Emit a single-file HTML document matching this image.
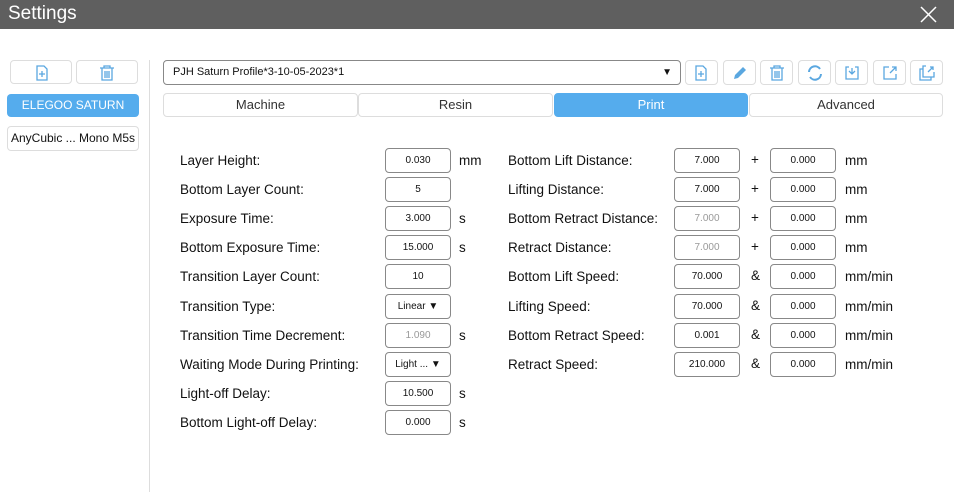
<!DOCTYPE html><html><head><style>
body{margin:0;width:954px;height:498px;background:#fff;font-family:"Liberation Sans",sans-serif;position:relative;overflow:hidden;color:#111}
.a{position:absolute}
.t{background:#5f5f5f;height:29px;left:0;top:0;width:954px;color:#fff;font-size:19px}
.btn{border:1px solid #ddd;border-radius:4px;background:#fff;box-sizing:border-box}
.lab{font-size:13.5px}
.in{border:1px solid #888;border-radius:4px;background:#fff;box-sizing:border-box;width:66px;height:25px;font-size:10px;text-align:center;line-height:23px}
.g{color:#999}
.tab{border:1px solid #ddd;border-radius:4px;box-sizing:border-box;height:24px;top:93px;font-size:13px;text-align:center;line-height:22px;color:#333}
.ic{top:60px;width:33px;height:25px}
.ic svg{position:absolute;left:8px;top:4px}
</style></head><body>
<div class="a t"><span class="a" style="left:8px;top:3px">Settings</span><svg class="a" style="left:920px;top:6px" width="17" height="17" viewBox="0 0 17 17" stroke="#fff" stroke-width="1.5"><path d="M1 1l15 15M16 1L1 16"/></svg></div>
<div class="a btn" style="left:10px;top:60px;width:62px;height:24px"><svg class="a" style="left:24px;top:4px" width="14" height="16" viewBox="0 0 14 16" fill="none" stroke="#5aa7e0" stroke-width="1.3"><path d="M2 1h7l3 3v11H2z M7 6v6 M4 9h6"/></svg></div>
<div class="a btn" style="left:76px;top:60px;width:62px;height:24px"><svg class="a" style="left:22px;top:4px" width="16" height="16" viewBox="0 0 16 16" fill="none" stroke="#5aa7e0" stroke-width="1.3"><path d="M1 3h14 M5 3V1h6v2 M3 3v12h10V3 M6 6v7 M8 6v7 M10 6v7"/></svg></div>
<div class="a" style="left:7px;top:94px;width:132px;height:23px;background:#55aced;border-radius:4px;color:#fff;font-size:12px;text-align:center;line-height:23px">ELEGOO SATURN</div>
<div class="a btn" style="left:7px;top:126px;width:132px;height:25px;font-size:12px;text-align:center;line-height:23px">AnyCubic ... Mono M5s</div>
<div class="a" style="left:149px;top:60px;width:1px;height:432px;background:#ddd"></div>
<div class="a" style="left:163px;top:60px;width:518px;height:25px;border:1px solid #888;border-radius:4px;box-sizing:border-box;font-size:11px;line-height:23px;padding-left:9px">PJH Saturn Profile*3-10-05-2023*1<span class="a" style="right:8px;top:0;font-size:10px">▼</span></div>
<div class="a btn ic" style="left:685px"><svg width="14" height="16" viewBox="0 0 14 16" fill="none" stroke="#5aa7e0" stroke-width="1.3"><path d="M2 1h7l3 3v11H2z M7 6v6 M4 9h6"/></svg></div>
<div class="a btn ic" style="left:723px"><svg width="16" height="16" viewBox="0 0 16 16"><path d="M2 14l1-4 8-8 3 3-8 8z" fill="#5aa7e0"/></svg></div>
<div class="a btn ic" style="left:760px"><svg width="16" height="16" viewBox="0 0 16 16" fill="none" stroke="#5aa7e0" stroke-width="1.3"><path d="M1 3h14 M5 3V1h6v2 M3 3v12h10V3 M6 6v7 M8 6v7 M10 6v7"/></svg></div>
<div class="a btn ic" style="left:798px"><svg width="16" height="16" viewBox="0 0 16 16" fill="none" stroke="#5aa7e0" stroke-width="2"><path d="M2 7a6 6 0 0 1 11-3 M14 9a6 6 0 0 1-11 3"/></svg></div>
<div class="a btn ic" style="left:835px"><svg width="16" height="16" viewBox="0 0 16 16" fill="none" stroke="#5aa7e0" stroke-width="1.3"><path d="M5 2H2v12h12V2h-3 M5 6l3 3 3-3 M8 9V3"/></svg></div>
<div class="a btn ic" style="left:873px"><svg width="16" height="16" viewBox="0 0 16 16" fill="none" stroke="#5aa7e0" stroke-width="1.3"><path d="M7 2H2v12h12V9 M8 8l6-6 M10 2h4v4"/></svg></div>
<div class="a btn ic" style="left:910px"><svg width="16" height="16" viewBox="0 0 16 16" fill="none" stroke="#5aa7e0" stroke-width="1.3"><path d="M4 4H1v11h11v-3 M7 1h-3v11h11V7 M9 7l5-5 M11 2h3v3"/></svg></div>
<div class="a tab" style="left:163px;width:195px">Machine</div>
<div class="a tab" style="left:358px;width:195px">Resin</div>
<div class="a tab" style="left:554px;width:194px;background:#55aced;border-color:#55aced;color:#fff">Print</div>
<div class="a tab" style="left:749px;width:194px">Advanced</div>
<div id="f"></div>
<script>
var L=[["Layer Height:","0.030","mm"],["Bottom Layer Count:","5",""],["Exposure Time:","3.000","s"],["Bottom Exposure Time:","15.000","s"],["Transition Layer Count:","10",""],["Transition Type:","Linear ▼",""],["Transition Time Decrement:","1.090","s",1],["Waiting Mode During Printing:","Light ... ▼",""],["Light-off Delay:","10.500","s"],["Bottom Light-off Delay:","0.000","s"]];
var R=[["Bottom Lift Distance:","7.000","+","mm"],["Lifting Distance:","7.000","+","mm"],["Bottom Retract Distance:","7.000","+","mm",1],["Retract Distance:","7.000","+","mm",1],["Bottom Lift Speed:","70.000","&","mm/min"],["Lifting Speed:","70.000","&","mm/min"],["Bottom Retract Speed:","0.001","&","mm/min"],["Retract Speed:","210.000","&","mm/min"]];
var h="";
L.forEach(function(r,i){var y=148+i*29.1;
h+="<div class='a lab' style='left:180px;top:"+(y+5)+"px'>"+r[0]+"</div><div class='a in"+(r[3]?" g":"")+"' style='left:385px;top:"+y+"px'>"+r[1]+"</div><div class='a lab' style='left:459px;top:"+(y+5)+"px'>"+r[2]+"</div>";});
R.forEach(function(r,i){var y=148+i*29.1;
h+="<div class='a lab' style='left:508px;top:"+(y+5)+"px'>"+r[0]+"</div><div class='a in"+(r[4]?" g":"")+"' style='left:674px;top:"+y+"px'>"+r[1]+"</div><div class='a lab' style='left:751px;top:"+(y+4)+"px'>"+r[2]+"</div><div class='a in' style='left:770px;top:"+y+"px'>0.000</div><div class='a lab' style='left:845px;top:"+(y+5)+"px'>"+r[3]+"</div>";});
document.getElementById("f").innerHTML=h;
</script>
</body></html>
